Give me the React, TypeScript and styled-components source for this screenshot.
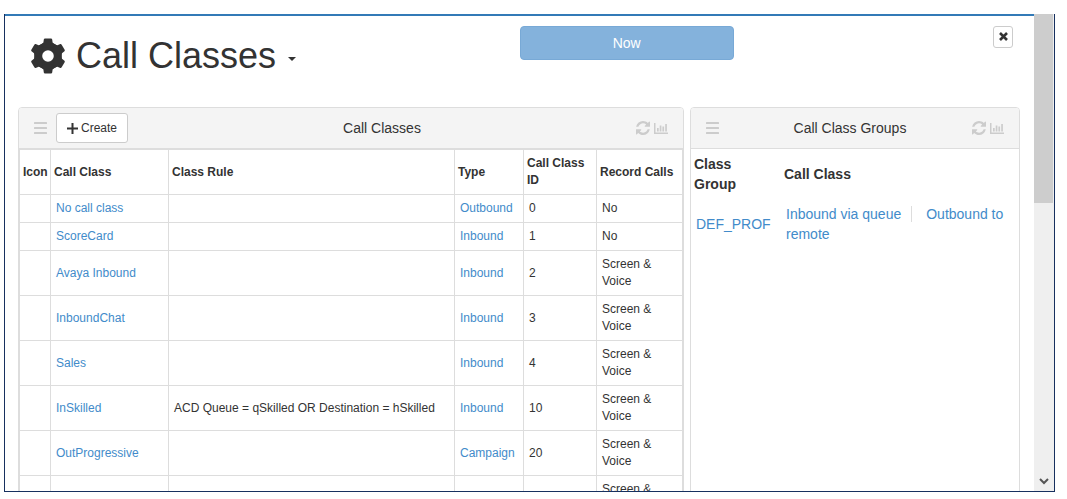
import React from 'react';
import styled, { createGlobalStyle } from 'styled-components';

const LINE = '#dddddd';

const GlobalStyle = createGlobalStyle`
  *, *::before, *::after { box-sizing: border-box; }
  body {
    margin: 0;
    background: #fff;
    color: #333;
    font: 14px/20px "Liberation Sans", Arial, sans-serif;
  }
  button { font: inherit; color: inherit; cursor: pointer; }
`;

const Frame = styled.div`
  display: flex;
  height: calc(100vh - 21px);
  margin: 14px 12px 7px 4px;
  border: solid #17305f;
  border-width: 0 1px 1px;
`;

const Content = styled.main`
  flex: 1;
  min-width: 0;
  overflow: hidden;
  border-top: 2px solid #337ab7;
`;

const TopBar = styled.header`
  display: grid;
  grid-template-columns: 12fr 5fr 7fr;
  align-items: start;
  height: 91px;
  padding-top: 10px;
`;

const Title = styled.h1`
  display: flex;
  align-items: center;
  gap: 10px;
  margin: 10px 0 0;
  padding-left: 25px;
  font-size: 36px;
  font-weight: 400;
  line-height: 40px;
  white-space: nowrap;
`;

const CaretButton = styled.button`
  display: flex;
  padding: 6px 0 0;
  border: 0;
  background: none;
  margin-left: 2px;
`;

const NowButton = styled.button`
  height: 34px;
  border: 1px solid #78a9d6;
  border-radius: 4px;
  background: #84b2dc;
  color: #fff;
`;

const CloseButton = styled.button`
  display: flex;
  align-items: center;
  justify-content: center;
  justify-self: end;
  width: 20px;
  height: 22px;
  margin-right: 21px;
  padding: 0 0 2px;
  border: 1px solid #ccc;
  border-radius: 3px;
  background: #fff;
`;

const Panels = styled.div`
  display: grid;
  grid-template-columns: 111fr 55fr;
  gap: 6px;
  padding: 0 14px 0 13px;
`;

const Panel = styled.section`
  min-width: 0;
  border: 1px solid ${LINE};
  border-radius: 4px;
`;

const PanelHead = styled.div`
  display: flex;
  align-items: center;
  height: 41px;
  padding: 0 15px;
  border-bottom: 1px solid ${LINE};
  border-radius: 3px 3px 0 0;
  background: #f4f4f4;
`;

const PanelTitle = styled.h2`
  flex: 1;
  margin: 0;
  font-size: 14px;
  font-weight: 400;
  text-align: center;
`;

const Tools = styled.div`
  display: flex;
  align-items: center;
  gap: 4px;
`;

const IconButton = styled.button`
  display: flex;
  padding: 0;
  border: 0;
  background: none;
  color: #ccc;
`;

const MenuButton = styled(IconButton)`
  margin-right: 9px;
`;

const CreateButton = styled.button`
  display: flex;
  align-items: center;
  gap: 3px;
  height: 30px;
  padding: 0 10px;
  border: 1px solid #ccc;
  border-radius: 3px;
  background: #fff;
  font-size: 12px;
`;

const Link = styled.a`
  color: #428bca;
  text-decoration: none;
`;

const ClassTable = styled.table`
  width: 100%;
  table-layout: fixed;
  border-collapse: separate;
  border-spacing: 0;
  border: solid ${LINE};
  border-width: 1px 0 0 1px;
  font-size: 12px;
  line-height: 17px;

  th, td {
    border: solid ${LINE};
    border-width: 0 1px 1px 0;
    text-align: left;
    vertical-align: middle;
  }
  th { padding: 5px 3px; }
  td { padding: 5px; }
`;

const Col = styled.col<{ $width?: number }>`
  width: ${(p) => (p.$width ? `${p.$width}px` : 'auto')};
`;

const GroupTable = styled.table`
  width: 100%;
  table-layout: fixed;
  border-collapse: collapse;

  th, td { text-align: left; vertical-align: middle; }
  th { padding: 5px 10px 5px 3px; }
  td { padding: 5px; }
`;

const GroupLink = styled(Link)`
  & + & {
    margin-left: 10px;
    padding-left: 14px;
    border-left: 1px solid ${LINE};
  }
`;

const ScrollBar = styled.div`
  display: flex;
  flex-direction: column;
  justify-content: space-between;
  width: 20px;
  background: #efefef;
`;

const Thumb = styled.div`
  height: 189px;
  margin-right: 1px;
  background: #cdcdcd;
`;

const ScrollDown = styled.button`
  display: flex;
  justify-content: center;
  padding: 0 0 6px;
  border: 0;
  background: none;
  color: #555;
`;

const CogIcon = () => (
  <svg width="36" height="36" viewBox="-18 -18 36 36" fill="currentColor" aria-hidden>
    <circle r="9.800" fill="none" stroke="currentColor" strokeWidth="8" />
    {[0, 60, 120, 180, 240, 300].map((angle) => (
      <path
        key={angle}
        transform={`rotate(${angle})`}
        d="M-6.500-11.500L-4.600-13.500L-4.200-16.600Q-4-17.500-3-17.500H3Q4-17.500 4.200-16.600L4.600-13.500L6.500-11.500L4-8.500H-4z"
      />
    ))}
  </svg>
);

const MenuIcon = () => (
  <svg width="13" height="12" viewBox="0 0 13 12" fill="currentColor" aria-hidden>
    <rect y="0" width="13" height="2" rx="0.5" />
    <rect y="5" width="13" height="2" rx="0.5" />
    <rect y="10" width="13" height="2" rx="0.5" />
  </svg>
);

const RefreshIcon = () => (
  <svg width="14" height="14" viewBox="0 128 1536 1536" fill="currentColor" aria-hidden>
    <path d="M1511 1056q0 5-1 7-64 268-268 434.500t-478 166.500q-146 0-282.500-55t-243.500-157l-129 129q-19 19-45 19t-45-19-19-45v-448q0-26 19-45t45-19h448q26 0 45 19t19 45-19 45l-137 137q71 66 161 102t187 36q134 0 250-65t186-179q11-17 53-117 8-23 30-23h192q13 0 22.500 9.500t9.500 22.500zm25-800v448q0 26-19 45t-45 19h-448q-26 0-45-19t-19-45 19-45l138-138q-148-137-349-137-134 0-250 65t-186 179q-11 17-53 117-8 23-30 23h-199q-13 0-22.500-9.500t-9.500-22.500v-7q65-268 270-434.500t480-166.500q146 0 284 55.500t245 156.500l130-129q19-19 45-19t45 19 19 45z" />
  </svg>
);

const ChartIcon = () => (
  <svg width="14" height="11" viewBox="0 0 14 11" fill="currentColor" aria-hidden>
    <path d="M0 0h1.500v9.500H14V11H0z" />
    <path d="M3 5h1.700v3.500H3zM5.700 2.500h1.700v6H5.700zM8.400 3.500h1.700v5H8.400zM11.200 1h1.700v7.500h-1.700z" />
  </svg>
);

const PlusIcon = () => (
  <svg width="11" height="11" viewBox="0 0 11 11" fill="currentColor" aria-hidden>
    <path d="M4.500 0h2v4.500H11v2H6.500V11h-2V6.500H0v-2h4.500z" />
  </svg>
);

const TimesIcon = () => (
  <svg width="9" height="9" viewBox="0 0 9 9" stroke="currentColor" strokeWidth="2.600" aria-hidden>
    <path d="M1 1l7 7M8 1L1 8" />
  </svg>
);

type Row = [name: string, rule: string, type: string, id: number, record: string];

const rows: Row[] = [
  ['No call class', '', 'Outbound', 0, 'No'],
  ['ScoreCard', '', 'Inbound', 1, 'No'],
  ['Avaya Inbound', '', 'Inbound', 2, 'Screen & Voice'],
  ['InboundChat', '', 'Inbound', 3, 'Screen & Voice'],
  ['Sales', '', 'Inbound', 4, 'Screen & Voice'],
  ['InSkilled', 'ACD Queue = qSkilled OR Destination = hSkilled', 'Inbound', 10, 'Screen & Voice'],
  ['OutProgressive', '', 'Campaign', 20, 'Screen & Voice'],
  ['', '', '', 0, 'Screen & Voice'],
];

const PanelTools = () => (
  <Tools>
    <IconButton aria-label="Refresh"><RefreshIcon /></IconButton>
    <IconButton aria-label="Chart"><ChartIcon /></IconButton>
  </Tools>
);

export default function App() {
  return (
    <>
      <GlobalStyle />
      <Frame>
        <Content>
          <TopBar>
            <Title>
              <CogIcon />
              Call Classes
              <CaretButton aria-label="Page menu">
                <svg width="8" height="4" viewBox="0 0 8 4" fill="currentColor"><path d="M0 0h8L4 4z" /></svg>
              </CaretButton>
            </Title>
            <NowButton>Now</NowButton>
            <CloseButton aria-label="Close"><TimesIcon /></CloseButton>
          </TopBar>
          <Panels>
            <Panel>
              <PanelHead>
                <MenuButton aria-label="Panel menu"><MenuIcon /></MenuButton>
                <CreateButton><PlusIcon />Create</CreateButton>
                <PanelTitle>Call Classes</PanelTitle>
                <PanelTools />
              </PanelHead>
              <ClassTable>
                <colgroup>
                  <Col $width={31} />
                  <Col $width={118} />
                  <Col />
                  <Col $width={69} />
                  <Col $width={73} />
                  <Col $width={86} />
                </colgroup>
                <thead>
                  <tr>
                    <th>Icon</th>
                    <th>Call Class</th>
                    <th>Class Rule</th>
                    <th>Type</th>
                    <th>Call Class ID</th>
                    <th>Record Calls</th>
                  </tr>
                </thead>
                <tbody>
                  {rows.map(([name, rule, type, id, record], i) => (
                    <tr key={i}>
                      <td />
                      <td>{name && <Link href="#">{name}</Link>}</td>
                      <td>{rule}</td>
                      <td>{type && <Link href="#">{type}</Link>}</td>
                      <td>{name && id}</td>
                      <td>{record}</td>
                    </tr>
                  ))}
                </tbody>
              </ClassTable>
            </Panel>
            <Panel>
              <PanelHead>
                <MenuButton aria-label="Panel menu"><MenuIcon /></MenuButton>
                <PanelTitle>Call Class Groups</PanelTitle>
                <PanelTools />
              </PanelHead>
              <GroupTable>
                <colgroup>
                  <Col $width={90} />
                  <Col />
                </colgroup>
                <thead>
                  <tr>
                    <th>Class Group</th>
                    <th>Call Class</th>
                  </tr>
                </thead>
                <tbody>
                  <tr>
                    <td><Link href="#">DEF_PROF</Link></td>
                    <td>
                      <GroupLink href="#">Inbound via queue</GroupLink>
                      <GroupLink href="#">Outbound to remote</GroupLink>
                    </td>
                  </tr>
                </tbody>
              </GroupTable>
            </Panel>
          </Panels>
        </Content>
        <ScrollBar>
          <Thumb />
          <ScrollDown aria-label="Scroll down">
            <svg width="10" height="7" viewBox="0 0 10 7" fill="none" stroke="currentColor" strokeWidth="2"><path d="M1 1l4 4 4-4" /></svg>
          </ScrollDown>
        </ScrollBar>
      </Frame>
    </>
  );
}
